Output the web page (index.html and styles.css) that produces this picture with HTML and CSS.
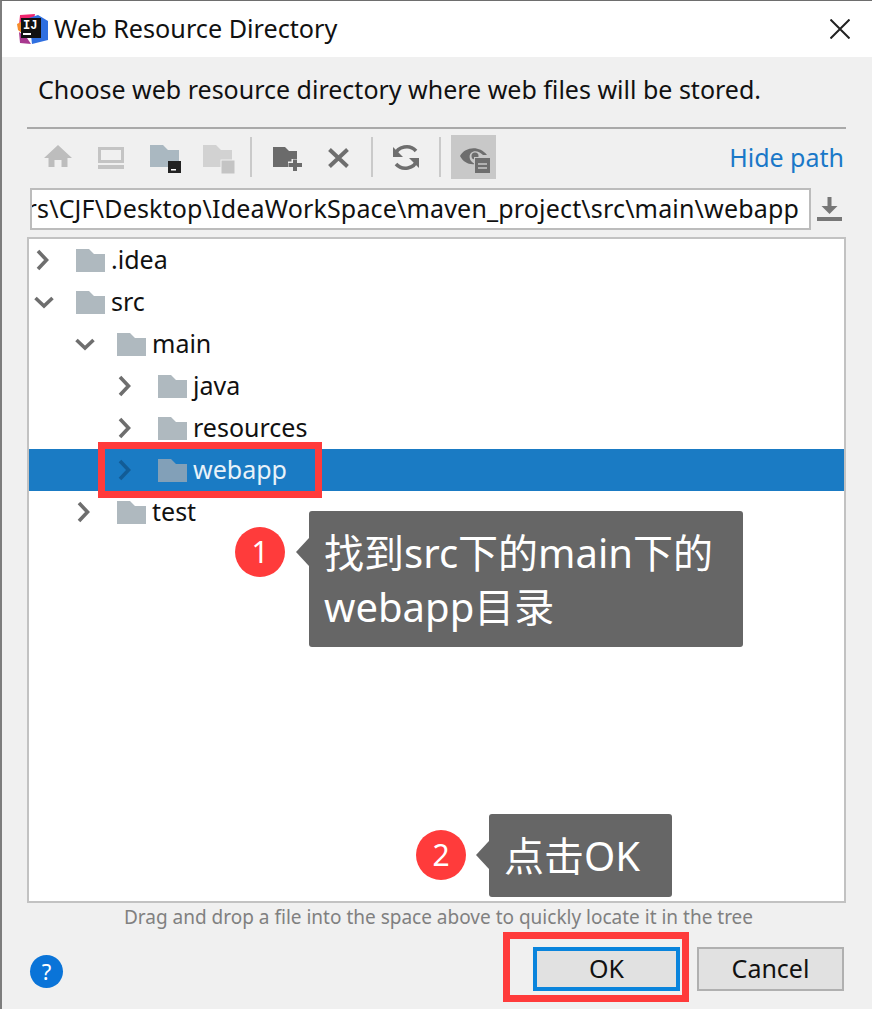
FILE: index.html
```html
<!DOCTYPE html>
<html lang="zh-CN">
<head>
  <meta charset="UTF-8" />
  <title>Web Resource Directory</title>
  <link rel="stylesheet" href="styles.css">
</head>
<body>

  <div class="dialog">

    <div class="titlebar">
      <svg class="logo" width="34" height="34" viewBox="0 0 34 34">
        <path d="M5 3 L20 2 L18 12 L4 14 Z" fill="#f0266f"/>
        <path d="M2 12 L8 9 L8 22 L3 18 Z" fill="#f58b2a"/>
        <path d="M4 20 L12 26 L16 32 L5 31 Z" fill="#a8388f"/>
        <path d="M14 6 L23 3 L33 9 L33 28 L17 32 Z" fill="#2f6fe0"/>
        <rect x="6" y="6" width="20" height="20" fill="#111"/>
        <text x="8" y="17" class="logo-text">IJ</text>
        <rect x="8" y="21" width="8" height="2" fill="#fff"/>
      </svg>
      <span class="title">Web Resource Directory</span>
      <svg class="close" width="20" height="20" viewBox="0 0 20 20">
        <path d="M0.5 0.5 L19.5 19.5 M19.5 0.5 L0.5 19.5" stroke="#222" stroke-width="2" fill="none"/>
      </svg>
    </div>

    <div class="content">
      <div class="prompt">Choose web resource directory where web files will be stored.</div>

      <div class="toolbar">
        <div class="tool">
          <svg width="45" height="44" viewBox="0 0 45 44"><path d="M22 10 L36 23 H31.5 V32 H25.5 V25 H18.5 V32 H12.5 V23 H8 Z" fill="#bdbdbd"/></svg>
        </div>
        <div class="tool">
          <svg width="45" height="44" viewBox="0 0 45 44"><rect x="10.5" y="13.5" width="23" height="13" fill="none" stroke="#c4c4c4" stroke-width="3"/><rect x="9" y="30" width="26" height="4" fill="#c4c4c4"/></svg>
        </div>
        <div class="tool">
          <svg width="45" height="44" viewBox="0 0 45 44"><path d="M8 10 H21 L26 15 H37 V32 H8 Z" fill="#aab8c1"/><rect x="26" y="26" width="13" height="12" fill="#222"/><rect x="29" y="34" width="5" height="1.5" fill="#fff"/></svg>
        </div>
        <div class="tool">
          <svg width="45" height="44" viewBox="0 0 45 44"><path d="M8 10 H21 L26 15 H37 V32 H8 Z" fill="#d2d2d2"/><rect x="26" y="25" width="14" height="14" fill="#c4c4c4" stroke="#f0f0f0" stroke-width="1"/></svg>
        </div>
        <div class="tool-sep"></div>
        <div class="tool">
          <svg width="45" height="44" viewBox="0 0 45 44"><path d="M10 12 H22 L26 16 H34 V32 H10 Z" fill="#6b6b6b"/><path d="M32 24 V36 M25 30 H39" stroke="#f0f0f0" stroke-width="7" fill="none"/><path d="M32 24.5 V36 M25.5 30 H39" stroke="#6b6b6b" stroke-width="4" fill="none"/></svg>
        </div>
        <div class="tool">
          <svg width="45" height="44" viewBox="0 0 45 44"><path d="M13.5 14.5 L31.5 31.5 M31.5 14.5 L13.5 31.5" stroke="#6e6e6e" stroke-width="4" fill="none"/></svg>
        </div>
        <div class="tool-sep"></div>
        <div class="tool">
          <svg width="45" height="44" viewBox="1 0 45 44">
            <path d="M33 16 A12 11 0 0 0 12 20" fill="none" stroke="#6e6e6e" stroke-width="3.5"/>
            <path d="M13 29 A12 11 0 0 0 34 25" fill="none" stroke="#6e6e6e" stroke-width="3.5"/>
            <path d="M10 12 V22 H20 Z" fill="#6e6e6e"/>
            <path d="M36 33 V23 H26 Z" fill="#6e6e6e"/>
          </svg>
        </div>
        <div class="tool-sep"></div>
        <div class="tool tool-on">
          <svg width="45" height="44" viewBox="0 0 45 44">
            <path d="M9 21 C14 12 28 10 36 20 L32 20 C28 16 23 15 20 18 C17 21 19 27 24 29 C18 30 12 27 9 21 Z" fill="#6e6e6e"/>
            <circle cx="24" cy="21" r="3.5" fill="#6e6e6e"/>
            <rect x="23" y="22" width="17" height="17" fill="#c8c8c8"/>
            <rect x="24" y="23" width="15" height="15" fill="#6e6e6e"/>
            <path d="M27 29 H36 M27 33 H36" stroke="#c8c8c8" stroke-width="1.5" fill="none"/>
          </svg>
        </div>
        <span class="hide-path">Hide path</span>
      </div>

      <div class="path-row">
        <div class="path-input"><span>C:\Users\CJF\Desktop\IdeaWorkSpace\maven_project\src\main\webapp</span></div>
        <svg class="download" width="25" height="24" viewBox="0 0 25 24">
          <path d="M12.5 0 V11" stroke="#777" stroke-width="4" fill="none"/>
          <path d="M4.5 9 H20.5 L12.5 17 Z" fill="#777"/>
          <rect x="0" y="20" width="25" height="4" fill="#777"/>
        </svg>
      </div>

      <div class="tree">
        <div class="row d0">
          <svg class="chev" width="22" height="24" viewBox="0 0 22 24"><path d="M5 3 L13.5 12 L5 21"/></svg>
          <svg class="folder" width="29" height="23" viewBox="0 0 29 23"><path d="M0 0 H13 L18 5 H29 V23 H0 Z"/></svg>
          <span>.idea</span>
        </div>
        <div class="row d0">
          <svg class="chev" width="22" height="24" viewBox="0 0 22 24"><path d="M2.5 8 L11 16 L19.5 8"/></svg>
          <svg class="folder" width="29" height="23" viewBox="0 0 29 23"><path d="M0 0 H13 L18 5 H29 V23 H0 Z"/></svg>
          <span>src</span>
        </div>
        <div class="row d1">
          <svg class="chev" width="22" height="24" viewBox="0 0 22 24"><path d="M2.5 8 L11 16 L19.5 8"/></svg>
          <svg class="folder" width="29" height="23" viewBox="0 0 29 23"><path d="M0 0 H13 L18 5 H29 V23 H0 Z"/></svg>
          <span>main</span>
        </div>
        <div class="row d2">
          <svg class="chev" width="22" height="24" viewBox="0 0 22 24"><path d="M5 3 L13.5 12 L5 21"/></svg>
          <svg class="folder" width="29" height="23" viewBox="0 0 29 23"><path d="M0 0 H13 L18 5 H29 V23 H0 Z"/></svg>
          <span>java</span>
        </div>
        <div class="row d2">
          <svg class="chev" width="22" height="24" viewBox="0 0 22 24"><path d="M5 3 L13.5 12 L5 21"/></svg>
          <svg class="folder" width="29" height="23" viewBox="0 0 29 23"><path d="M0 0 H13 L18 5 H29 V23 H0 Z"/></svg>
          <span>resources</span>
        </div>
        <div class="row d2 selected">
          <svg class="chev" width="22" height="24" viewBox="0 0 22 24"><path d="M5 3 L13.5 12 L5 21"/></svg>
          <svg class="folder" width="29" height="23" viewBox="0 0 29 23"><path d="M0 0 H13 L18 5 H29 V23 H0 Z"/></svg>
          <span>webapp</span>
        </div>
        <div class="row d1">
          <svg class="chev" width="22" height="24" viewBox="0 0 22 24"><path d="M5 3 L13.5 12 L5 21"/></svg>
          <svg class="folder" width="29" height="23" viewBox="0 0 29 23"><path d="M0 0 H13 L18 5 H29 V23 H0 Z"/></svg>
          <span>test</span>
        </div>
      </div>

      <div class="hint">Drag and drop a file into the space above to quickly locate it in the tree</div>

      <div class="footer">
        <div class="help">?</div>
        <button class="btn btn-default">OK</button>
        <button class="btn">Cancel</button>
      </div>
    </div>
  </div>

  <!-- 标注 -->
  <div class="mark mark-webapp"></div>
  <div class="mark mark-ok"></div>

  <div class="note note-1">
    <div class="badge">1</div>
    <div class="bubble">找到src下的main下的<br>webapp目录</div>
  </div>

  <div class="note note-2">
    <div class="badge">2</div>
    <div class="bubble">点击OK</div>
  </div>

</body>
</html>
```

FILE: styles.css
```css
html, body {
  margin: 0;
  height: 100%;
  overflow: hidden;
}

body {
  position: relative;
  width: 872px;
  height: 1009px;
  font-family: "Noto Sans", "Noto Sans CJK SC", sans-serif;
  color: #111;
}

.dialog {
  box-sizing: border-box;
  display: flex;
  flex-direction: column;
  height: 1009px;
  border-top: 1px solid #6e6e6e;
  border-left: 2px solid #7d7d7d;
  background: #f0f0f0;
}

.titlebar {
  display: flex;
  align-items: center;
  height: 56px;
  flex-shrink: 0;
  background: #fff;
}

.logo {
  margin-left: 13px;
}

.logo-text {
  font-family: "Liberation Mono", monospace;
  font-size: 12px;
  font-weight: bold;
  fill: #fff;
}

.title {
  margin-left: 5px;
  padding-bottom: 3px;
  font-size: 25.2px;
}

.close {
  margin-left: auto;
  margin-right: 22px;
}

.content {
  box-sizing: border-box;
  display: flex;
  flex-direction: column;
  flex: 1;
  min-height: 0;
  padding: 0 26px 18px 25px;
}

.prompt {
  height: 70px;
  line-height: 65px;
  font-size: 25px;
  white-space: nowrap;
  border-bottom: 2px solid #a9a9a9;
  padding-left: 11px;
}

.toolbar {
  display: flex;
  align-items: center;
  gap: 8px;
  height: 44px;
  margin-top: 6px;
  padding-left: 9px;
}

.tool {
  width: 45px;
  height: 44px;
  flex-shrink: 0;
}

.tool svg {
  display: block;
}

.tool-on {
  margin-left: -1px;
  background: #c8c8c8;
}

.tool-sep {
  width: 2px;
  height: 40px;
  margin: 0 3px 0 2px;
  background: #cacaca;
}

.hide-path {
  margin-left: auto;
  margin-right: 2px;
  font-size: 25px;
  color: #1a78c8;
}

.path-row {
  display: flex;
  align-items: center;
  margin-top: 9px;
}

.path-input {
  box-sizing: border-box;
  display: flex;
  justify-content: flex-end;
  width: 781px;
  height: 42px;
  margin-left: 3px;
  padding: 0 10px;
  overflow: hidden;
  border: 2px solid #bcbcbc;
  background: #fff;
  font-size: 25px;
  letter-spacing: 0.17px;
  line-height: 36px;
  white-space: nowrap;
}

.download {
  margin-left: 6px;
}

.tree {
  box-sizing: border-box;
  flex: 1;
  min-height: 0;
  margin-top: 7px;
  border: 2px solid #c2c2c2;
  background: #fff;
}

.row {
  display: flex;
  align-items: center;
  height: 42px;
  font-size: 25px;
}

.row span {
  padding-bottom: 2px;
}

.d0 { padding-left: 4px; }
.d1 { padding-left: 45px; }
.d2 { padding-left: 86px; }

.chev {
  margin-right: 21px;
  flex-shrink: 0;
}

.chev path {
  fill: none;
  stroke: #6e6e6e;
  stroke-width: 3.6;
}

.folder {
  margin-right: 6px;
  flex-shrink: 0;
}

.folder path {
  fill: #afb9bf;
}

.selected {
  background: #1a7bc4;
  color: #e8f2f9;
}

.selected .chev path {
  stroke: #125c96;
}

.selected .folder path {
  fill: #82a0b8;
}

.hint {
  height: 29px;
  padding-left: 4px;
  line-height: 28px;
  text-align: center;
  font-size: 19px;
  color: #808080;
  white-space: nowrap;
}

.footer {
  display: flex;
  align-items: center;
  height: 44px;
  margin-top: 15px;
  padding-right: 2px;
}

.help {
  box-sizing: border-box;
  width: 33px;
  height: 33px;
  margin-left: 3px;
  margin-top: 4px;
  border-radius: 50%;
  background: #0a74d8;
  color: #fff;
  font-size: 22px;
  line-height: 32px;
  text-align: center;
}

.btn {
  box-sizing: border-box;
  width: 147px;
  height: 44px;
  padding: 0 0 3px;
  border: 2px solid #b0b0b0;
  background: #e1e1e1;
  font-family: inherit;
  font-size: 25px;
  color: #111;
}

.btn-default {
  margin-left: auto;
  margin-right: 17px;
  border: 4px solid #0a84dc;
}

/* 标注 */
.mark {
  position: absolute;
  box-sizing: border-box;
  border: 7px solid #ff3b3b;
}

.mark-webapp {
  left: 98px;
  top: 442px;
  width: 224px;
  height: 56px;
}

.mark-ok {
  left: 503px;
  top: 932px;
  width: 186px;
  height: 70px;
}

.note {
  position: absolute;
  display: flex;
  align-items: flex-start;
}

.note-1 {
  left: 235px;
  top: 511px;
}

.note-2 {
  left: 416px;
  top: 814px;
}

.badge {
  width: 50px;
  height: 50px;
  margin-top: 16px;
  border-radius: 50%;
  background: #ff3b3b;
  color: #fff;
  font-size: 30px;
  line-height: 50px;
  text-align: center;
}

.bubble {
  position: relative;
  margin-left: 24px;
  padding: 15px;
  border-radius: 3px;
  background: #666;
  color: #fff;
  font-size: 40px;
  line-height: 54px;
  white-space: nowrap;
}

.note-1 .bubble {
  width: 404px;
  height: 106px;
}

.note-2 .bubble {
  width: 153px;
  height: 53px;
  margin-left: 23px;
}

.bubble::before {
  content: "";
  position: absolute;
  left: -13px;
  top: 27px;
  border-top: 14px solid transparent;
  border-bottom: 14px solid transparent;
  border-right: 13px solid #666;
}
```
